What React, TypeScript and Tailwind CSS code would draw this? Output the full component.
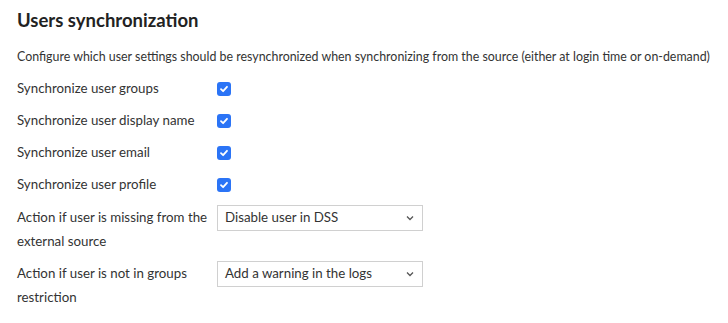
import React from "react";

function Check() {
  return (
    <span className="inline-flex h-[14px] w-[14px] items-center justify-center rounded-[3px] bg-[#2b74f6]">
      <svg width="10" height="10" viewBox="0 0 10 10" fill="none">
        <path d="M2 5.2 L4.1 7.2 L8 2.8" stroke="white" strokeWidth="1.8" strokeLinecap="round" strokeLinejoin="round" />
      </svg>
    </span>
  );
}

function Select({ value }: { value: string }) {
  return (
    <div className="flex h-[26px] w-[206px] items-center justify-between border border-[#d0d0d0] bg-white pl-[7px] pr-[8px] text-[13.3px] text-[#333]">
      <span>{value}</span>
      <svg width="8" height="6" viewBox="0 0 8 6" fill="none">
        <path d="M1 1.5 L4 4.5 L7 1.5" stroke="#555" strokeWidth="1.3" />
      </svg>
    </div>
  );
}

export default function App() {
  const checks = [
    "Synchronize user groups",
    "Synchronize user display name",
    "Synchronize user email",
    "Synchronize user profile",
  ];
  return (
    <div className="min-h-[323px] w-[728px] bg-white pl-[17px] pt-[6px] text-[#333]" style={{ fontFamily: "Lato, 'Liberation Sans', sans-serif" }}>
      <h1 className="mb-[11px] text-[18.5px] font-bold leading-[28px] text-[#222]">Users synchronization</h1>
      <p className="mb-[8px] whitespace-nowrap text-[12.4px] leading-[24px]">
        Configure which user settings should be resynchronized when synchronizing from the source (either at login time or on-demand)
      </p>
      {checks.map((c) => (
        <div key={c} className="mb-[8px] flex h-[24px] items-center text-[13.3px]">
          <div className="w-[200px]">{c}</div>
          <Check />
        </div>
      ))}
      <div className="mb-[8px] flex text-[13.3px]">
        <div className="w-[200px] pr-[8px] leading-[24px]">Action if user is missing from the external source</div>
        <Select value="Disable user in DSS" />
      </div>
      <div className="flex text-[13.3px]">
        <div className="w-[200px] pr-[8px] leading-[24px]">Action if user is not in groups restriction</div>
        <Select value="Add a warning in the logs" />
      </div>
    </div>
  );
}
